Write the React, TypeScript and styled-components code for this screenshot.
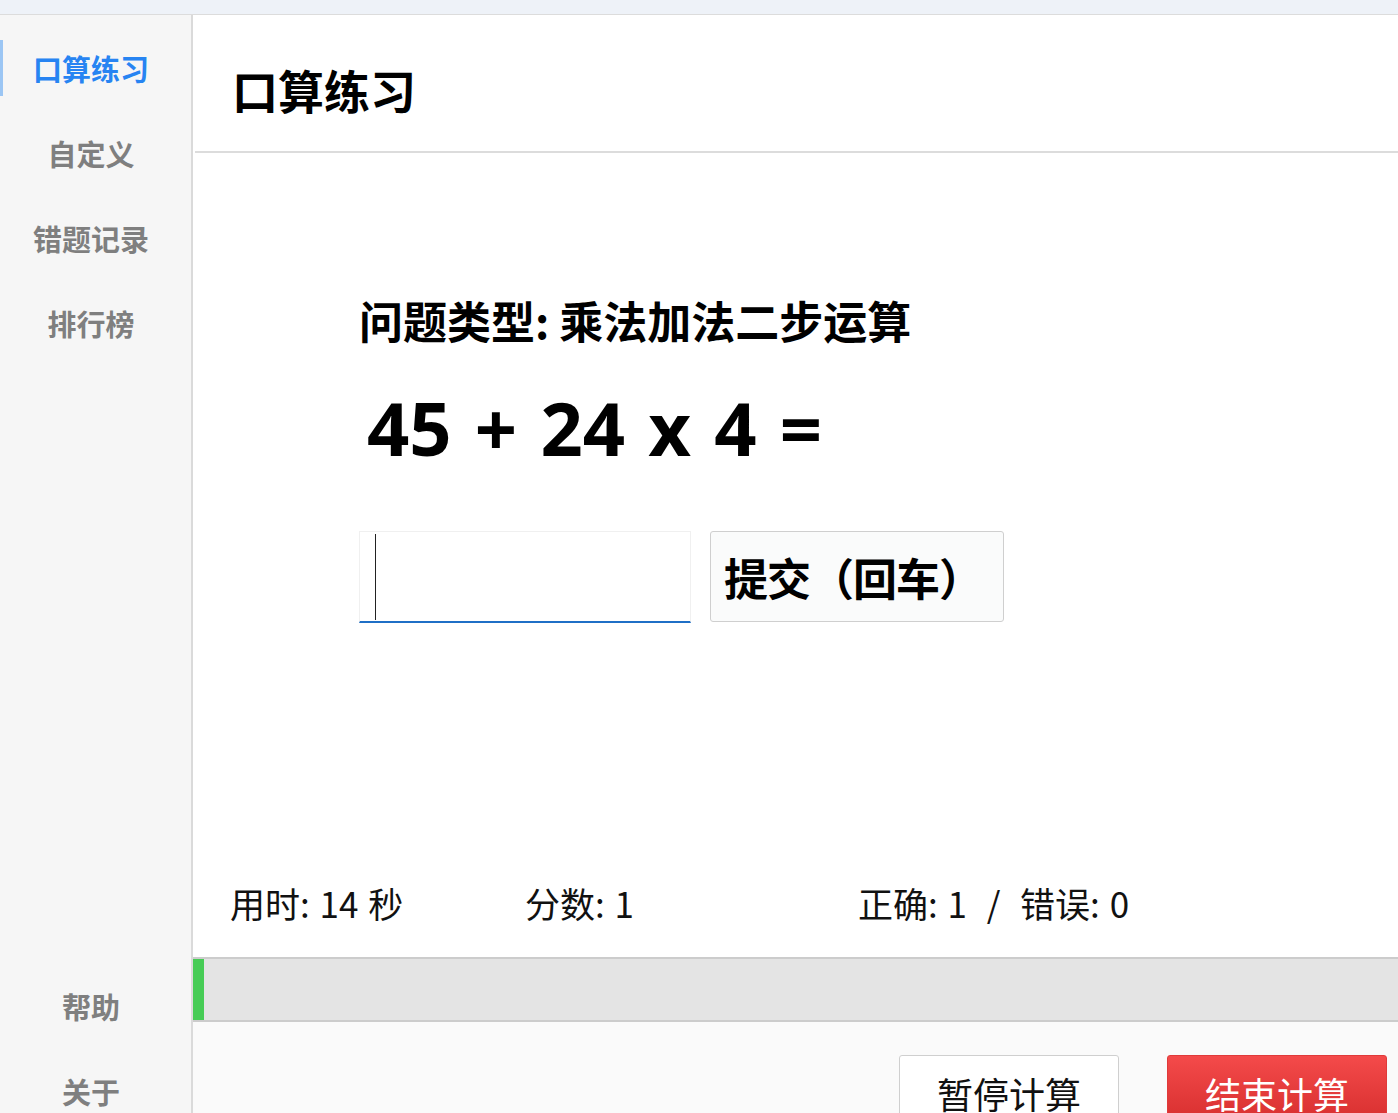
import React from 'react'
import styled, { createGlobalStyle } from 'styled-components'

const GlobalStyle = createGlobalStyle`
  html, body {
    margin: 0;
    padding: 0;
    height: 1113px;
    overflow: hidden;
    background: #ffffff;
    font-family: "Noto Sans CJK SC", "Noto Sans", sans-serif;
  }
  * { box-sizing: border-box; }
`

const TopStrip = styled.div`
  height: 15px;
  background: #eef2f8;
  border-bottom: 1px solid #dcdcdc;
`

const Layout = styled.div`
  display: flex;
  height: 1098px;
`

const Sidebar = styled.nav`
  width: 193px;
  flex-shrink: 0;
  background: #f6f6f6;
  border-right: 2px solid #dadada;
  display: flex;
  flex-direction: column;
  padding: 25px 0 0;
  margin-bottom: -6px;
  gap: 29px;
`

const Spacer = styled.div`
  flex: 1;
`

const NavItem = styled.div<{ $active?: boolean }>`
  height: 56px;
  display: flex;
  align-items: center;
  justify-content: center;
  padding-right: 12px;
  font-size: 29px;
  font-weight: 700;
  color: ${p => (p.$active ? '#2784f2' : '#7f7f7f')};
  border-left: 3px solid ${p => (p.$active ? '#9cc6f4' : 'transparent')};
  flex-shrink: 0;
`

const Main = styled.main`
  flex: 1;
  display: flex;
  flex-direction: column;
  min-width: 0;
`

const Header = styled.header`
  height: 138px;
  margin-left: 2px;
  border-bottom: 2px solid #dcdcdc;
  display: flex;
  align-items: center;
  padding: 12px 0 0 37px;
  flex-shrink: 0;
`

const PageTitle = styled.h1`
  margin: 0;
  font-size: 46px;
  font-weight: 700;
  color: #000;
  line-height: 1;
`

const Body = styled.section`
  flex: 1;
  display: flex;
  flex-direction: column;
  padding: 137px 0 0 166px;
`

const QuestionType = styled.div`
  font-size: 44px;
  font-weight: 700;
  color: #000;
  line-height: 60px;
`

const Equation = styled.div`
  margin-top: 42px;
  margin-left: 8px;
  font-family: "Open Sans", "Noto Sans CJK SC", sans-serif;
  font-size: 74px;
  font-weight: 700;
  color: #000;
  line-height: 72px;
  word-spacing: 4px;
`

const AnswerRow = styled.div`
  display: flex;
  gap: 19px;
  margin-top: 67px;
`

const AnswerInput = styled.div`
  width: 332px;
  height: 92px;
  background: #fff;
  border: 1px solid #f0f0f0;
  border-bottom: 2px solid #1f6fc6;
  position: relative;
`

const Caret = styled.span`
  position: absolute;
  left: 15px;
  top: 2px;
  width: 1px;
  height: 86px;
  background: #222;
`

const SubmitButton = styled.button`
  width: 294px;
  height: 91px;
  background: #fafbfb;
  border: 1px solid #cfcfcf;
  border-radius: 3px;
  font-family: inherit;
  font-size: 44px;
  font-weight: 700;
  color: #000;
  text-align: left;
  padding: 0 0 0 13px;
  letter-spacing: -1px;
`

const Stats = styled.div`
  display: flex;
  align-items: center;
  height: 100px;
  padding: 0 0 10px 37px;
  font-size: 35px;
  color: #111;
  flex-shrink: 0;
`

const Stat = styled.span<{ $width?: number }>`
  width: ${p => (p.$width ? `${p.$width}px` : 'auto')};
  white-space: pre;
  word-spacing: 2px;
`

const Progress = styled.div`
  height: 65px;
  background: #e4e4e4;
  border-top: 2px solid #cccccc;
  border-bottom: 2px solid #cccccc;
  flex-shrink: 0;
  display: flex;
`

const ProgressFill = styled.div`
  height: 100%;
  background: #46cc55;
`

const Footer = styled.footer`
  height: 91px;
  flex-shrink: 0;
  background: #fafafa;
  display: flex;
  justify-content: flex-end;
  align-items: flex-start;
  gap: 48px;
  padding: 33px 11px 0 0;
  overflow: hidden;
`

const FooterButton = styled.button<{ $danger?: boolean }>`
  width: 220px;
  height: 76px;
  flex-shrink: 0;
  border-radius: 3px;
  font-family: inherit;
  font-size: 36px;
  font-weight: 400;
  line-height: 1;
  padding: 0;
  color: ${p => (p.$danger ? '#ffffff' : '#111')};
  background: ${p => (p.$danger ? 'linear-gradient(#f44a4a, #d42c2c)' : '#ffffff')};
  border: 1px solid ${p => (p.$danger ? '#e03a3a' : '#cfcfcf')};
`

export default function App() {
  const progress = 11
  return (
    <>
      <GlobalStyle />
      <TopStrip />
      <Layout>
        <Sidebar>
          <NavItem $active>口算练习</NavItem>
          <NavItem>自定义</NavItem>
          <NavItem>错题记录</NavItem>
          <NavItem>排行榜</NavItem>
          <Spacer />
          <NavItem>帮助</NavItem>
          <NavItem>关于</NavItem>
        </Sidebar>
        <Main>
          <Header>
            <PageTitle>口算练习</PageTitle>
          </Header>
          <Body>
            <QuestionType>问题类型: 乘法加法二步运算</QuestionType>
            <Equation>45 + 24 x 4 =</Equation>
            <AnswerRow>
              <AnswerInput>
                <Caret />
              </AnswerInput>
              <SubmitButton>提交（回车）</SubmitButton>
            </AnswerRow>
          </Body>
          <Stats>
            <Stat $width={295}>用时: 14 秒</Stat>
            <Stat $width={333}>分数: 1</Stat>
            <Stat>正确: 1  /  错误: 0</Stat>
          </Stats>
          <Progress>
            <ProgressFill style={{ width: `${progress}px` }} />
          </Progress>
          <Footer>
            <FooterButton>暂停计算</FooterButton>
            <FooterButton $danger>结束计算</FooterButton>
          </Footer>
        </Main>
      </Layout>
    </>
  )
}
